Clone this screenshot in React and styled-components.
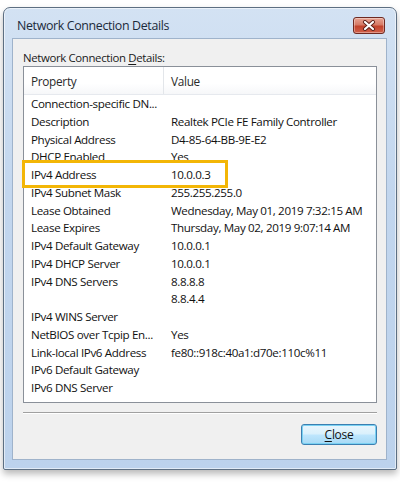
import React from "react";
import styled, { createGlobalStyle } from "styled-components";

const GlobalStyle = createGlobalStyle`
  html, body { margin: 0; padding: 0; background: #ffffff; }
  body { font-family: "Open Sans", "Noto Sans", sans-serif; }
`;

const Page = styled.div`
  width: 400px;
  height: 482px;
  padding: 7px 3px 0 3px;
  box-sizing: border-box;
`;

const Window = styled.div`
  width: 394px;
  height: 463px;
  box-sizing: border-box;
  border: 1px solid #5d6f82;
  border-radius: 7px 7px 2px 2px;
  background: linear-gradient(180deg, #d3e2f3 0%, #c2d6ee 40%, #bcd2ec 100%);
  box-shadow: 0 4px 7px rgba(0, 0, 0, 0.28), inset 0 0 0 1px rgba(255, 255, 255, 0.55);
  display: flex;
  flex-direction: column;
`;

const TitleBar = styled.div`
  height: 30px;
  box-sizing: border-box;
  flex: none;
  display: flex;
  align-items: flex-start;
  justify-content: space-between;
  padding: 9px 11px 0 13px;
`;

const Title = styled.div`
  font-size: 12.4px;
  line-height: 17px;
  color: #1b2a3a;
  letter-spacing: -0.35px;
`;

const CloseX = styled.div`
  width: 32px;
  height: 17px;
  box-sizing: border-box;
  border: 1px solid #6e2a22;
  border-radius: 3px;
  background: linear-gradient(180deg, #e8a493 0%, #d67a66 45%, #c2432c 55%, #d1614b 100%);
  box-shadow: inset 0 0 0 1px rgba(255, 255, 255, 0.35);
  display: flex;
  align-items: center;
  justify-content: center;
`;

const Client = styled.div`
  flex: 1;
  margin: 0 9px 9px 8px;
  border: 1px solid #9fb3cb;
  background: #f0f0f0;
  padding: 11px 9px 0 10px;
  display: flex;
  flex-direction: column;
`;

const Label = styled.div`
  font-size: 11.4px;
  line-height: 16px;
  color: #1a1a1a;
  letter-spacing: -0.35px;
  & u { text-decoration-thickness: 1px; text-underline-offset: 2px; }
`;

const ListBox = styled.div`
  height: 337px;
  box-sizing: border-box;
  border: 1px solid #8a9099;
  background: #ffffff;
  display: flex;
  flex-direction: column;
`;

const Header = styled.div`
  height: 27px;
  flex: none;
  display: grid;
  grid-template-columns: 140px 1fr;
  border-bottom: 1px solid #e6e9ee;
  background: linear-gradient(180deg, #ffffff 0%, #ffffff 60%, #f6f7f9 100%);
`;

const HeadCell = styled.div`
  font-size: 11.8px;
  color: #2a2a2a;
  display: flex;
  align-items: center;
  padding-left: ${({ pad }) => pad}px;
  border-right: ${({ divider }) => (divider ? "1px solid #e3e6ea" : "none")};
  letter-spacing: -0.3px;
`;

const Row = styled.div`
  position: relative;
  height: 17.75px;
  display: grid;
  grid-template-columns: 140px 1fr;
  font-size: 11.6px;
  line-height: 17.75px;
  color: #111;
  letter-spacing: -0.35px;
`;

const Cell = styled.div`
  padding-left: ${({ pad }) => pad}px;
  white-space: nowrap;
`;

const Highlight = styled.div`
  position: absolute;
  left: -2px;
  top: -6px;
  width: 206px;
  height: 28px;
  box-sizing: border-box;
  border: 3px solid #f3b606;
  pointer-events: none;
`;

const Separator = styled.div`
  margin-top: 9px;
  height: 1px;
  background: #a0a0a0;
  border-bottom: 1px solid #ffffff;
`;

const Footer = styled.div`
  display: flex;
  justify-content: flex-end;
  padding-top: 10px;
`;

const Button = styled.button`
  width: 76px;
  height: 21px;
  box-sizing: border-box;
  border: 1px solid #3c7fb1;
  border-radius: 3px;
  background: linear-gradient(180deg, #eaf6fd 0%, #d9f0fc 48%, #bee6fd 52%, #a7d9f5 100%);
  box-shadow: inset 0 0 0 1px #7ad1f2;
  font-family: "Open Sans", "Noto Sans", sans-serif;
  font-size: 12px;
  letter-spacing: -0.3px;
  color: #111;
  padding: 0;
  & u { text-decoration-thickness: 1px; text-underline-offset: 2px; }
`;

const rows = [
  ["Connection-specific DN...", ""],
  ["Description", "Realtek PCIe FE Family Controller"],
  ["Physical Address", "D4-85-64-BB-9E-E2"],
  ["DHCP Enabled", "Yes"],
  ["IPv4 Address", "10.0.0.3", true],
  ["IPv4 Subnet Mask", "255.255.255.0"],
  ["Lease Obtained", "Wednesday, May 01, 2019 7:32:15 AM"],
  ["Lease Expires", "Thursday, May 02, 2019 9:07:14 AM"],
  ["IPv4 Default Gateway", "10.0.0.1"],
  ["IPv4 DHCP Server", "10.0.0.1"],
  ["IPv4 DNS Servers", "8.8.8.8"],
  ["", "8.8.4.4"],
  ["IPv4 WINS Server", ""],
  ["NetBIOS over Tcpip En...", "Yes"],
  ["Link-local IPv6 Address", "fe80::918c:40a1:d70e:110c%11"],
  ["IPv6 Default Gateway", ""],
  ["IPv6 DNS Server", ""],
];

const App = () => {
  return (
    <>
      <GlobalStyle />
      <Page>
        <Window>
          <TitleBar>
            <Title>Network Connection Details</Title>
            <CloseX>
              <svg width="14" height="11" viewBox="0 0 14 11">
                <path d="M3 2 L11 9 M11 2 L3 9" stroke="#5a1f18" strokeWidth="4" strokeLinecap="round" />
                <path d="M3 2 L11 9 M11 2 L3 9" stroke="#ffffff" strokeWidth="2.2" strokeLinecap="round" />
              </svg>
            </CloseX>
          </TitleBar>
          <Client>
            <Label>
              Network Connection <u>D</u>etails:
            </Label>
            <ListBox>
              <Header>
                <HeadCell pad={7} divider>Property</HeadCell>
                <HeadCell pad={7}>Value</HeadCell>
              </Header>
              {rows.map((r, i) => (
                <Row key={i}>
                  <Cell pad={7}>{r[0]}</Cell>
                  <Cell pad={7}>{r[1]}</Cell>
                  {r[2] && <Highlight />}
                </Row>
              ))}
            </ListBox>
            <Separator />
            <Footer>
              <Button>
                <u>C</u>lose
              </Button>
            </Footer>
          </Client>
        </Window>
      </Page>
    </>
  );
};

export default App;
